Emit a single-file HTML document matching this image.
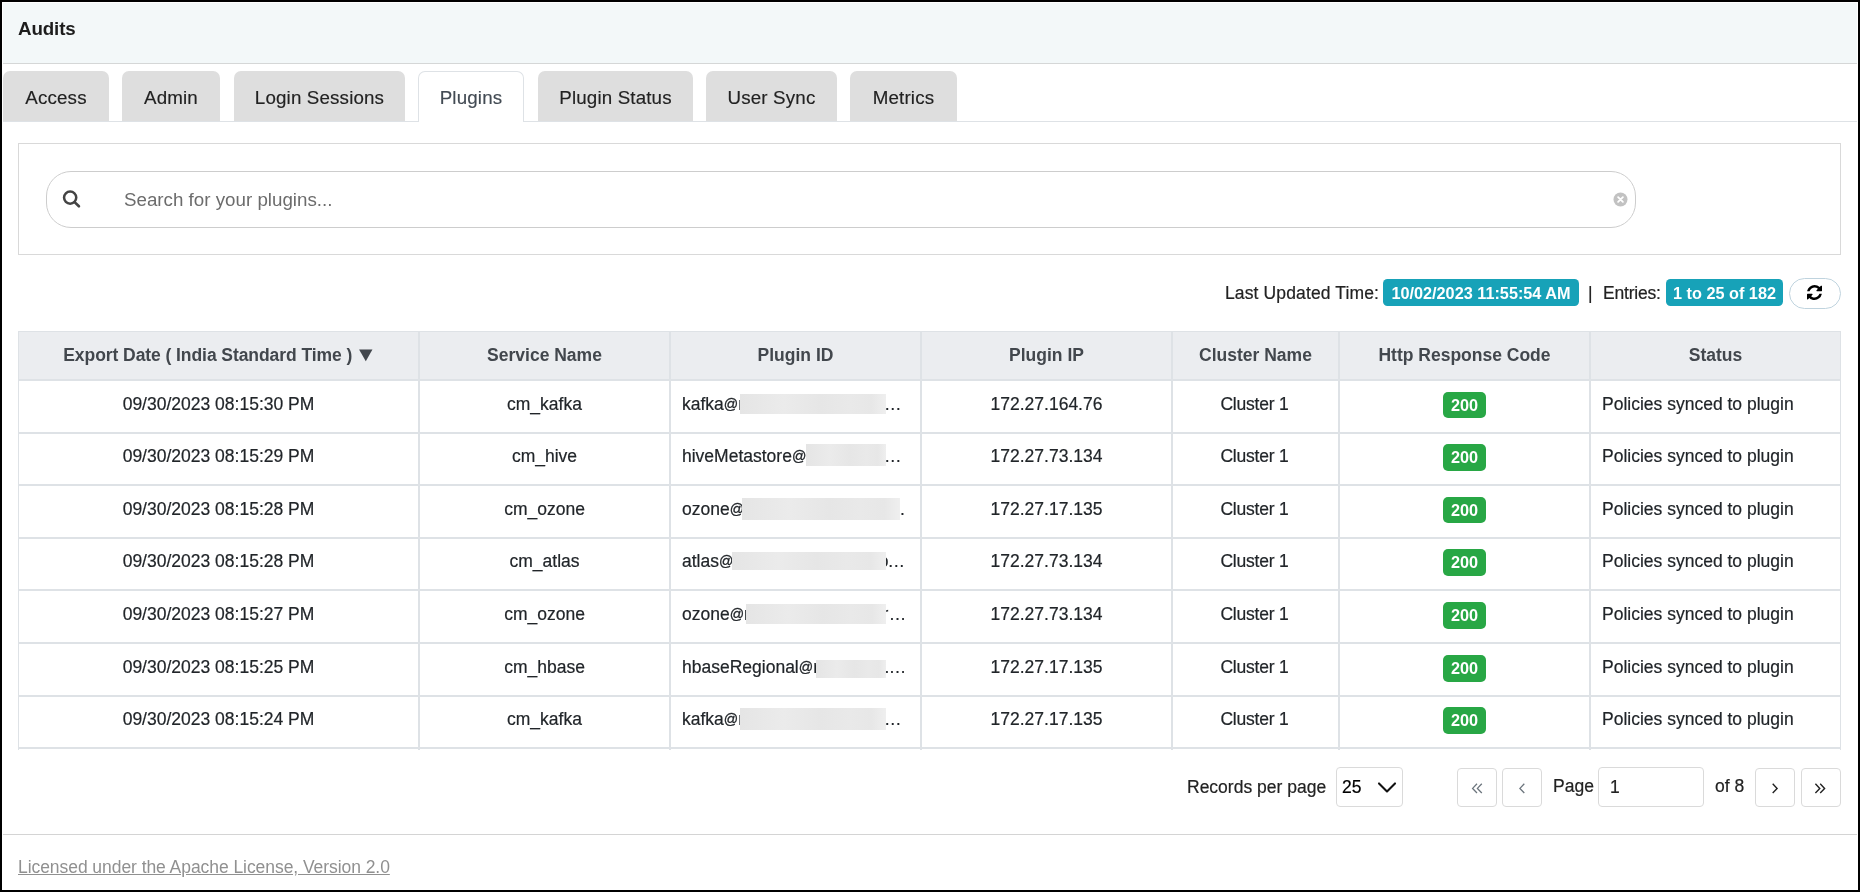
<!DOCTYPE html>
<html lang="en">
<head>
<meta charset="utf-8">
<title>Audits - Plugins</title>
<style>
*{box-sizing:border-box;margin:0;padding:0}
html,body{width:1860px;height:892px;overflow:hidden;background:#fff}
body{font-family:"Liberation Sans",Arial,sans-serif;color:#1f1f1f;font-size:17.5px;position:relative}
.abs{position:absolute}
body>*{will-change:transform}
#frame{position:absolute;left:0;top:0;width:1860px;height:892px;border:2px solid #000;z-index:50;pointer-events:none}
#hdr{position:absolute;left:3px;top:3px;width:1854px;height:60px;background:#f3f8f9}
#hdrline{position:absolute;left:3px;top:63px;width:1854px;height:1px;background:#d5d7d7}
#title{position:absolute;left:18px;top:18px;letter-spacing:-0.12px;font-weight:bold;font-size:18.75px;line-height:22px;color:#1d1d1d;white-space:nowrap}
#tabline{position:absolute;left:3px;top:121px;width:1854px;height:1px;background:#dee2e6}
.tab{position:absolute;top:71px;height:50px;background:#dedede;border-radius:7px 7px 0 0;font-size:18.75px;line-height:50px;text-align:center;color:#222;white-space:nowrap;padding-top:2px;letter-spacing:0.15px;-webkit-text-stroke:0.15px}
.tab.active{background:#fff;border:1px solid #dee2e6;border-bottom:none;height:51px;color:#434b54;line-height:48px}
#panel{position:absolute;left:18px;top:143px;width:1823px;height:112px;border:1px solid #d9d9d9;background:#fff}
#search{position:absolute;left:46px;top:171px;width:1590px;height:57px;border:1px solid #cdcdcd;border-radius:25px;background:#fff}
#ph{position:absolute;left:124px;top:189px;font-size:18.75px;line-height:22px;color:#6c6c6c;white-space:nowrap}
.info{-webkit-text-stroke:0.2px;position:absolute;top:282px;height:22px;line-height:22px;font-size:17.5px;color:#222;white-space:nowrap}
.badge{position:absolute;top:279px;height:27px;line-height:28px;border-radius:4.5px;background:#17a2b8;color:#fff;font-weight:bold;font-size:16.25px;text-align:center;white-space:nowrap}
#refresh{position:absolute;left:1789px;top:278px;width:52px;height:31px;border:1px solid #bfd3de;border-radius:16px;background:#fff}
/* table */
#thead{position:absolute;left:18px;top:331px;width:1823px;height:49px;background:#ebedf0}
.hl{position:absolute;left:18px;width:1823px;height:2px;background:#dee2e6}
.vl{position:absolute;top:331px;width:2px;height:419px;background:#dee2e6}
.th{position:absolute;top:344px;height:22px;line-height:22px;font-weight:bold;font-size:17.5px;color:#42474d;text-align:center;white-space:nowrap}
.tri{display:inline-block;font-size:20px;line-height:10px;margin-left:-1px;position:relative;top:0px;left:-0.5px;transform:scale(1.14,1.0)}
.td{-webkit-text-stroke:0.2px #212529;position:absolute;height:22px;line-height:22px;font-size:17.5px;color:#212529;text-align:center;white-space:nowrap}
.td.l{text-align:left}
.at{font-size:14.2px;vertical-align:1px;-webkit-text-stroke:0.3px}
.g{position:absolute;width:43px;height:26px;line-height:26px;border-radius:5px;background:#28a745;color:#fff;font-weight:bold;font-size:16.25px;text-align:center}
.blur{position:absolute;background:linear-gradient(90deg,#e5e5e5 0%,#ebebeb 30%,#e6e6e6 55%,#e9e9e9 75%,#e7e7e7 90%,#efefef 100%)}
/* pager */
.pg{-webkit-text-stroke:0.2px;position:absolute;top:776px;height:22px;line-height:22px;font-size:17.5px;color:#222;white-space:nowrap}
.box{position:absolute;border:1px solid #dadada;border-radius:4px;background:#fff}
#footline{position:absolute;left:3px;top:834px;width:1854px;height:1px;background:#d4d4d4}
#lic{position:absolute;left:18px;top:856px;font-size:17.5px;line-height:22px;color:#909090;letter-spacing:-0.06px;text-decoration:underline;white-space:nowrap}
</style>
</head>
<body>
<div id="hdr"></div>
<div id="hdrline"></div>
<div id="title">Audits</div>

<div id="tabline"></div>
<div class="tab" style="left:3px;width:106px">Access</div>
<div class="tab" style="left:122px;width:98px">Admin</div>
<div class="tab" style="left:234px;width:171px">Login Sessions</div>
<div class="tab active" style="left:418px;width:106px">Plugins</div>
<div class="tab" style="left:538px;width:155px">Plugin Status</div>
<div class="tab" style="left:706px;width:131px">User Sync</div>
<div class="tab" style="left:850px;width:107px">Metrics</div>

<div id="panel"></div>
<div id="search"></div>
<svg class="abs" style="left:62px;top:190px" width="19" height="19" viewBox="0 0 19 19"><circle cx="8.15" cy="7.6" r="6.1" fill="none" stroke="#444" stroke-width="2.5"/><path d="M12.6 12.1 L16.9 16.3" stroke="#444" stroke-width="2.7" stroke-linecap="round"/></svg>
<div id="ph">Search for your plugins...</div>
<svg class="abs" style="left:1612.5px;top:192.3px" width="15" height="15" viewBox="0 0 15 15"><circle cx="7.5" cy="7.5" r="7" fill="#c2c2c2"/><path d="M5.1 5.1 L9.9 9.9 M9.9 5.1 L5.1 9.9" stroke="#fff" stroke-width="1.8" stroke-linecap="round"/></svg>

<div class="info" style="left:1225px;letter-spacing:0.13px">Last Updated Time:</div>
<div class="badge" style="left:1383px;width:196px">10/02/2023 11:55:54 AM</div>
<div class="info" style="left:1588px">|</div>
<div class="info" style="left:1603px;letter-spacing:-0.2px">Entries:</div>
<div class="badge" style="left:1666px;width:117px">1 to 25 of 182</div>
<div id="refresh"></div>
<svg class="abs" style="left:1807px;top:285px" width="15" height="15" viewBox="0 0 1536 1536"><path fill="#000" d="M1511 928q0 5-1 7-64 268-268 434.500t-478 166.500q-146 0-282.500-55t-243.500-157l-129 129q-19 19-45 19t-45-19-19-45v-448q0-26 19-45t45-19h448q26 0 45 19t19 45-19 45l-137 137q71 66 161 102t187 36q134 0 250-65t186-179q11-17 53-117 8-23 30-23h192q13 0 22.500 9.500t9.500 22.500zM1536 128v448q0 26-19 45t-45 19h-448q-26 0-45-19t-19-45 19-45l138-138q-148-137-349-137-134 0-250 65t-186 179q-11 17-53 117-8 23-30 23h-199q-13 0-22.500-9.500t-9.500-22.500v-7q65-268 270-434.500t480-166.500q146 0 284 55.500t245 156.500l130-129q19-19 45-19t45 19 19 45z"/></svg>

<div id="thead"></div>
<div id="lines">
<div class="hl" style="top:331px;height:1px"></div>
<div class="hl" style="top:379px"></div>
<div class="hl" style="top:432px"></div>
<div class="hl" style="top:484px"></div>
<div class="hl" style="top:537px"></div>
<div class="hl" style="top:589px"></div>
<div class="hl" style="top:642px"></div>
<div class="hl" style="top:695px"></div>
<div class="hl" style="top:747px"></div>
<div class="vl" style="left:18px;width:1px"></div>
<div class="vl" style="left:418px"></div>
<div class="vl" style="left:669px"></div>
<div class="vl" style="left:920px"></div>
<div class="vl" style="left:1171px"></div>
<div class="vl" style="left:1338px"></div>
<div class="vl" style="left:1589px"></div>
<div class="vl" style="left:1840px;width:1px"></div>
</div><!--/lines-->
<div id="cells">
<div class="th" style="left:18px;width:401px;letter-spacing:-0.07px;padding-left:2px">Export Date ( India Standard Time ) <span class="tri">▼</span></div>
<div class="th" style="left:419px;width:251px">Service Name</div>
<div class="th" style="left:670px;width:251px">Plugin ID</div>
<div class="th" style="left:921px;width:251px">Plugin IP</div>
<div class="th" style="left:1172px;width:167px">Cluster Name</div>
<div class="th" style="left:1339px;width:251px">Http Response Code</div>
<div class="th" style="left:1590px;width:251px">Status</div>
<div class="td" style="left:18px;width:401px;top:393px">09/30/2023 08:15:30 PM</div>
<div class="td" style="left:419px;width:251px;top:393px">cm_kafka</div>
<div class="td l" style="left:682px;top:393px">kafka<span class="at">@</span>r</div>
<div class="blur" style="left:740px;width:146px;top:394px;height:20px"></div>
<div class="td l" style="left:884px;top:393px">…</div>
<div class="td" style="left:921px;width:251px;top:393px">172.27.164.76</div>
<div class="td" style="left:1171px;width:167px;top:393px;letter-spacing:-0.2px">Cluster 1</div>
<div class="g" style="left:1443px;top:392px">200</div>
<div class="td l" style="left:1602px;top:393px">Policies synced to plugin</div>
<div class="td" style="left:18px;width:401px;top:445px">09/30/2023 08:15:29 PM</div>
<div class="td" style="left:419px;width:251px;top:445px">cm_hive</div>
<div class="td l" style="left:682px;top:445px">hiveMetastore<span class="at">@</span></div>
<div class="blur" style="left:806px;width:80px;top:444px;height:22px"></div>
<div class="td l" style="left:884px;top:445px">…</div>
<div class="td" style="left:921px;width:251px;top:445px">172.27.73.134</div>
<div class="td" style="left:1171px;width:167px;top:445px;letter-spacing:-0.2px">Cluster 1</div>
<div class="g" style="left:1443px;top:444px;height:27px">200</div>
<div class="td l" style="left:1602px;top:445px">Policies synced to plugin</div>
<div class="td" style="left:18px;width:401px;top:498px">09/30/2023 08:15:28 PM</div>
<div class="td" style="left:419px;width:251px;top:498px">cm_ozone</div>
<div class="td l" style="left:682px;top:498px">ozone<span class="at">@</span></div>
<div class="blur" style="left:742px;width:158px;top:498px;height:22px"></div>
<div class="td l" style="left:900px;top:498px">.</div>
<div class="td" style="left:921px;width:251px;top:498px">172.27.17.135</div>
<div class="td" style="left:1171px;width:167px;top:498px;letter-spacing:-0.2px">Cluster 1</div>
<div class="g" style="left:1443px;top:497px">200</div>
<div class="td l" style="left:1602px;top:498px">Policies synced to plugin</div>
<div class="td" style="left:18px;width:401px;top:550px">09/30/2023 08:15:28 PM</div>
<div class="td" style="left:419px;width:251px;top:550px">cm_atlas</div>
<div class="td l" style="left:682px;top:550px">atlas<span class="at">@</span></div>
<div class="td l" style="left:878.7px;top:550px">o</div>
<div class="blur" style="left:732px;width:154px;top:552px;height:18px"></div>
<div class="td l" style="left:887.5px;top:550px">…</div>
<div class="td" style="left:921px;width:251px;top:550px">172.27.73.134</div>
<div class="td" style="left:1171px;width:167px;top:550px;letter-spacing:-0.2px">Cluster 1</div>
<div class="g" style="left:1443px;top:549px;height:27px">200</div>
<div class="td l" style="left:1602px;top:550px">Policies synced to plugin</div>
<div class="td" style="left:18px;width:401px;top:603px">09/30/2023 08:15:27 PM</div>
<div class="td" style="left:419px;width:251px;top:603px">cm_ozone</div>
<div class="td l" style="left:682px;top:603px">ozone<span class="at">@</span>r</div>
<div class="td l" style="left:882.6px;top:603px">r</div>
<div class="blur" style="left:746px;width:140px;top:604px;height:20px"></div>
<div class="td l" style="left:888.7px;top:603px">…</div>
<div class="td" style="left:921px;width:251px;top:603px">172.27.73.134</div>
<div class="td" style="left:1171px;width:167px;top:603px;letter-spacing:-0.2px">Cluster 1</div>
<div class="g" style="left:1443px;top:602px;height:27px">200</div>
<div class="td l" style="left:1602px;top:603px">Policies synced to plugin</div>
<div class="td" style="left:18px;width:401px;top:656px">09/30/2023 08:15:25 PM</div>
<div class="td" style="left:419px;width:251px;top:656px">cm_hbase</div>
<div class="td l" style="left:682px;top:656px">hbaseRegional<span class="at">@</span>r</div>
<div class="blur" style="left:816px;width:70px;top:660px;height:18px"></div>
<div class="td l" style="left:884.5px;top:656px">.</div>
<div class="td l" style="left:888.7px;top:656px">…</div>
<div class="td" style="left:921px;width:251px;top:656px">172.27.17.135</div>
<div class="td" style="left:1171px;width:167px;top:656px;letter-spacing:-0.2px">Cluster 1</div>
<div class="g" style="left:1443px;top:655px;height:27px">200</div>
<div class="td l" style="left:1602px;top:656px">Policies synced to plugin</div>
<div class="td" style="left:18px;width:401px;top:708px">09/30/2023 08:15:24 PM</div>
<div class="td" style="left:419px;width:251px;top:708px">cm_kafka</div>
<div class="td l" style="left:682px;top:708px">kafka<span class="at">@</span>r</div>
<div class="blur" style="left:740px;width:146px;top:708px;height:22px"></div>
<div class="td l" style="left:884px;top:708px">…</div>
<div class="td" style="left:921px;width:251px;top:708px">172.27.17.135</div>
<div class="td" style="left:1171px;width:167px;top:708px;letter-spacing:-0.2px">Cluster 1</div>
<div class="g" style="left:1443px;top:707px;height:27px">200</div>
<div class="td l" style="left:1602px;top:708px">Policies synced to plugin</div>
</div><!--/cells-->

<div id="pager">
<div class="pg" style="left:1187px">Records per page</div>
<div class="box" style="left:1336px;top:767px;width:67px;height:40px"></div>
<div class="pg" style="left:1342px;color:#000">25</div>
<svg class="abs" style="left:1376px;top:780px" width="22" height="14" viewBox="0 0 22 14"><path d="M3 3.4 L11 11.4 L19 3.4" fill="none" stroke="#111" stroke-width="2.1" stroke-linecap="round" stroke-linejoin="round"/></svg>
<div class="box" style="left:1457px;top:768px;width:40px;height:39px"></div>
<div class="box" style="left:1502px;top:768px;width:40px;height:39px"></div>
<div class="pg" style="left:1553px;top:775px">Page</div>
<div class="box" style="left:1598px;top:767px;width:106px;height:40px"></div>
<div class="pg" style="left:1610px">1</div>
<div class="pg" style="left:1715px;top:775px">of 8</div>
<div class="box" style="left:1755px;top:768px;width:40px;height:39px"></div>
<div class="box" style="left:1801px;top:768px;width:40px;height:39px"></div>
<svg class="abs" style="left:1470px;top:781px" width="14" height="14" viewBox="0 0 14 14"><path d="M7 2.8 L2.6 7.4 L7 12 M11.8 2.8 L7.4 7.4 L11.8 12" fill="none" stroke="#6c757d" stroke-width="1.3"/></svg>
<svg class="abs" style="left:1515px;top:781px" width="14" height="14" viewBox="0 0 14 14"><path d="M9.3 2.8 L4.9 7.4 L9.3 12" fill="none" stroke="#6c757d" stroke-width="1.3"/></svg>
<svg class="abs" style="left:1768px;top:781px" width="14" height="14" viewBox="0 0 14 14"><path d="M4.7 2.8 L9.1 7.4 L4.7 12" fill="none" stroke="#222" stroke-width="1.4"/></svg>
<svg class="abs" style="left:1813px;top:781px" width="14" height="14" viewBox="0 0 14 14"><path d="M2.4 2.8 L6.8 7.4 L2.4 12 M7.2 2.8 L11.6 7.4 L7.2 12" fill="none" stroke="#222" stroke-width="1.4"/></svg>
</div><!--/pager-->

<div id="footline"></div>
<div id="lic">Licensed under the Apache License, Version 2.0</div>

<div id="frame"></div>
</body>
</html>
